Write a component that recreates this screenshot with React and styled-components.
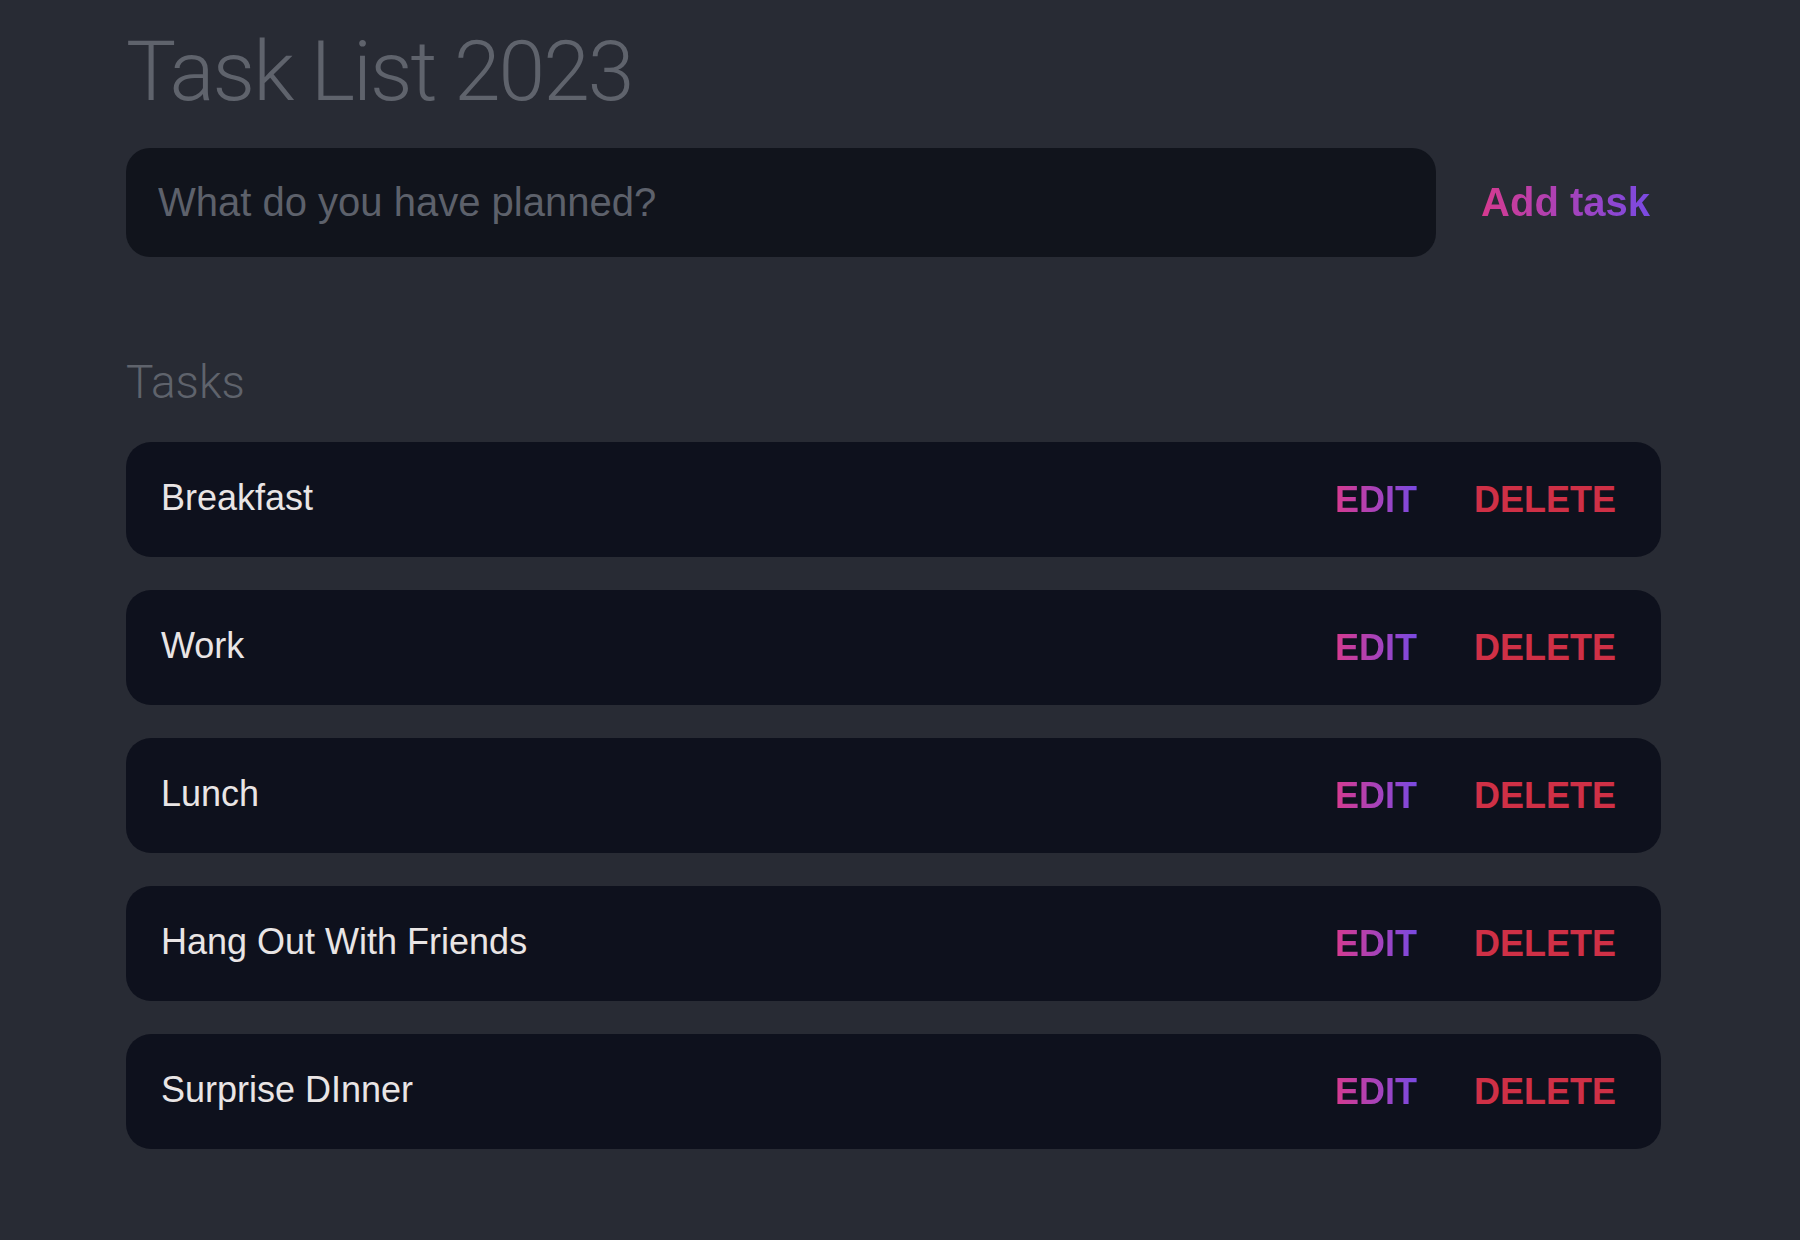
import React from 'react'
import styled, { createGlobalStyle } from 'styled-components';

const GlobalStyle = createGlobalStyle`
  html, body {
    margin: 0;
    padding: 0;
    background: #282b34;
    font-family: "Liberation Sans", Arial, sans-serif;
  }
  * { box-sizing: border-box; }
`

const tasks = ['Breakfast', 'Work', 'Lunch', 'Hang Out With Friends', 'Surprise DInner'];

const App = () => {
  return (
    <Page>
      <GlobalStyle />
      <Wrapper>
        <Title>Task List 2023</Title>
        <Form onSubmit={e => e.preventDefault()}>
          <Input type="text" placeholder="What do you have planned?" />
          <AddButton type="submit"><Gradient>Add task</Gradient></AddButton>
        </Form>
        <Heading>Tasks</Heading>
        <List>
          {tasks.map(t => (
            <Row key={t}>
              <TaskText>{t}</TaskText>
              <Actions>
                <ActionButton><Gradient>EDIT</Gradient></ActionButton>
                <ActionButton danger>DELETE</ActionButton>
              </Actions>
            </Row>
          ))}
        </List>
      </Wrapper>
    </Page>
  )
}

export default App

const Page = styled.div`
  min-height: 1240px;
  background: #282b34;
  padding: 30px 0 0 126px;
`

const Wrapper = styled.div`
  width: 1535px;
  display: flex;
  flex-direction: column;
`

const Title = styled.h1`
  margin: 0;
  font-family: Roboto, "Liberation Sans", sans-serif;
  font-weight: 300;
  font-size: 84px;
  line-height: 1;
  color: #5f636c;
  letter-spacing: -2px;
`

const Form = styled.form`
  margin-top: 34px;
  display: flex;
  align-items: center;
  gap: 45px;
`

const Input = styled.input`
  flex: 1;
  height: 109px;
  border: none;
  outline: none;
  border-radius: 24px;
  background: #11141c;
  padding: 0 32px;
  font-family: "Liberation Sans", Arial, sans-serif;
  font-size: 40px;
  color: #e9e5e5;
  &::placeholder { color: #5d616b; }
`

const AddButton = styled.button`
  border: none;
  background: none;
  padding: 0 11px 0 0;
  font-family: "Liberation Sans", Arial, sans-serif;
  font-weight: 700;
  font-size: 40px;
  cursor: pointer;
`

const Gradient = styled.span`
  background: linear-gradient(90deg, #d63a8f, #7a4ae2);
  -webkit-background-clip: text;
  background-clip: text;
  color: transparent;
`

const Heading = styled.h2`
  margin: 102px 0 0;
  font-family: Roboto, "Liberation Sans", sans-serif;
  font-weight: 300;
  font-size: 46px;
  line-height: 1;
  color: #5f636c;
`

const List = styled.div`
  margin-top: 37px;
  display: flex;
  flex-direction: column;
  gap: 33px;
`

const Row = styled.div`
  height: 115px;
  border-radius: 25px;
  background: #0e111d;
  display: flex;
  align-items: center;
  justify-content: space-between;
  padding: 0 45px 0 35px;
`

const TaskText = styled.span`
  font-size: 36px;
  color: #e9e5e5;
  margin-top: -3px;
`

const Actions = styled.div`
  display: flex;
  align-items: center;
  gap: 57px;
`

const ActionButton = styled.button`
  border: none;
  background: none;
  padding: 0;
  font-family: "Liberation Sans", Arial, sans-serif;
  font-weight: 700;
  font-size: 36px;
  color: ${p => (p.danger ? '#cf3046' : 'inherit')};
  cursor: pointer;
`
